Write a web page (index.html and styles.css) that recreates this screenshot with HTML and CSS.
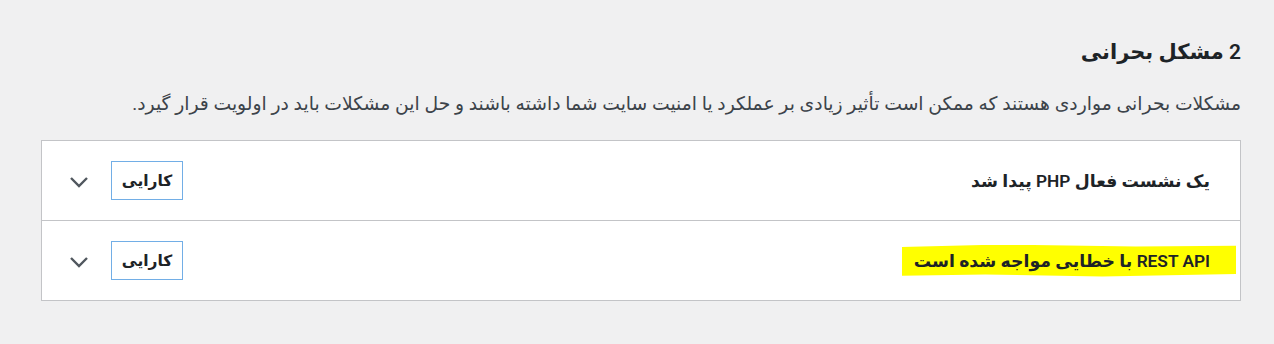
FILE: index.html
```html
<!DOCTYPE html>
<html lang="fa" dir="rtl">
<head>
    <meta charset="UTF-8">
    <title>مشکلات بحرانی</title>
    <link rel="stylesheet" href="styles.css">
</head>
<body>
    <div class="wrap">
        <h2 class="title">2 مشکل بحرانی</h2>
        <p class="desc">مشکلات بحرانی مواردی هستند که ممکن است تأثیر زیادی بر عملکرد یا امنیت سایت شما داشته باشند و حل این مشکلات باید در اولویت قرار گیرد.</p>
        <div class="issues">
            <div class="issue">
                <span class="issue-label">یک نشست فعال PHP پیدا شد</span>
                <div class="actions">
                    <span class="badge">کارایی</span>
                    <svg class="chevron" width="20" height="12" viewBox="0 0 20 12"><path d="M2 2 L10 10 L18 2" fill="none" stroke="#50575e" stroke-width="2.4"/></svg>
                </div>
            </div>
            <div class="issue">
                <span class="issue-label marked">REST API با خطایی مواجه شده است</span>
                <div class="actions">
                    <span class="badge">کارایی</span>
                    <svg class="chevron" width="20" height="12" viewBox="0 0 20 12"><path d="M2 2 L10 10 L18 2" fill="none" stroke="#50575e" stroke-width="2.4"/></svg>
                </div>
            </div>
        </div>
    </div>
</body>
</html>
```

FILE: styles.css
```css
body {
    margin: 0;
    background-color: #f0f0f1;
    font-family: Roboto, "DejaVu Sans", sans-serif;
    color: #1d2327;
}
.wrap {
    padding: 30px 33px 0 41px;
}
.title {
    margin: 0;
    font-size: 21px;
    font-weight: 600;
    line-height: 44px;
}
.desc {
    margin: 18px 0 24px;
    font-size: 18.8px;
    line-height: 24px;
    color: #3c434a;
}
.issues {
    background-color: #fff;
    border: 1px solid #c3c4c7;
}
.issue {
    display: flex;
    justify-content: space-between;
    align-items: center;
    height: 79px;
    padding: 0 30px 0 27px;
}
.issue + .issue {
    border-top: 1px solid #c3c4c7;
}
.issue-label {
    font-size: 17.3px;
    font-weight: 600;
    color: #1d2327;
}
.marked {
    background-color: #ffff00;
    padding: 6px 26px 6px 12px;
    margin-right: -26px;
    margin-left: -12px;
    clip-path: polygon(0 8%, 30% 0, 70% 6%, 100% 4%, 100% 92%, 60% 100%, 25% 94%, 0 98%);
}
.actions {
    display: flex;
    align-items: center;
    gap: 22px;
}
.badge {
    display: flex;
    align-items: center;
    justify-content: center;
    width: 70px;
    height: 37px;
    border: 1px solid #72aee6;
    font-size: 15.5px;
    font-weight: 600;
}
.chevron {
    display: block;
    margin-top: 2px;
}
```
